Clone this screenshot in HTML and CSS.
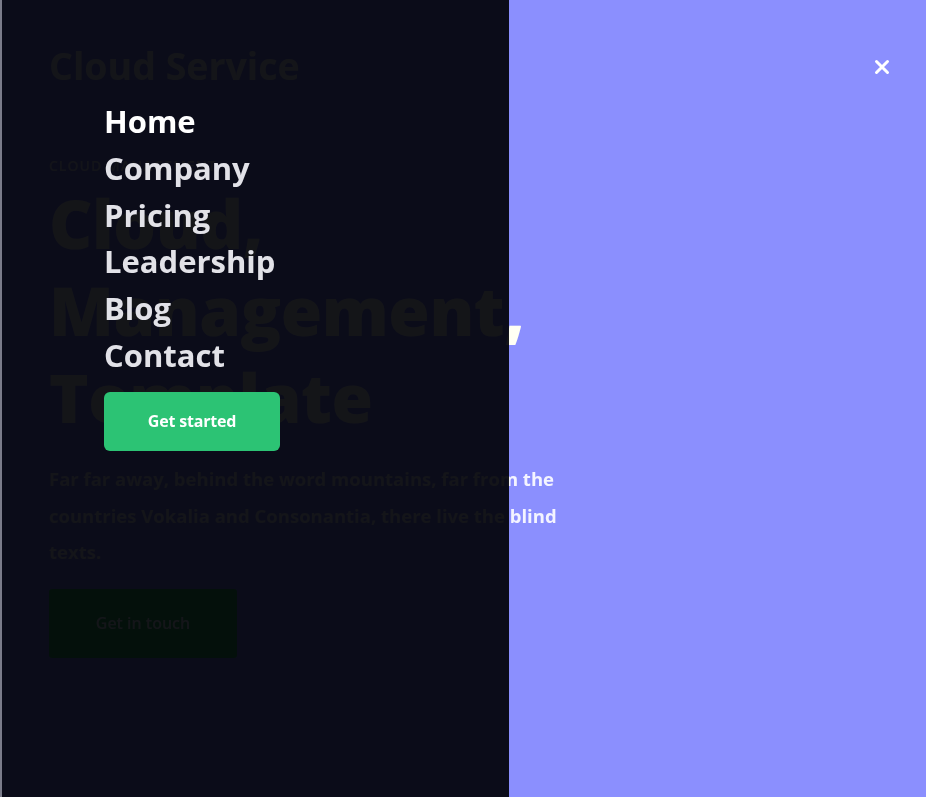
FILE: index.html
```html
<!DOCTYPE html>
<html lang="en">
<head>
<meta charset="utf-8">
<title>Cloud Service</title>
<link rel="stylesheet" href="styles.css">
</head>
<body>
  <div class="page">
    <header class="nav">
      <div class="logo">Cloud Service</div>
    </header>
    <section class="hero">
      <p class="eyebrow">Cloud management</p>
      <h1 class="title">Cloud,<br>Management,<br>Template</h1>
      <p class="lead">Far far away, behind the word mountains, far from the<br>countries Vokalia and Consonantia, there live the blind<br>texts.</p>
      <a class="btn-touch" href="#">Get in touch</a>
    </section>
  </div>

  <div class="dim"></div>

  <nav class="drawer">
    <ul class="menu">
      <li><a class="menu-link active" href="#">Home</a></li>
      <li><a class="menu-link" href="#">Company</a></li>
      <li><a class="menu-link" href="#">Pricing</a></li>
      <li><a class="menu-link" href="#">Leadership</a></li>
      <li><a class="menu-link" href="#">Blog</a></li>
      <li><a class="menu-link" href="#">Contact</a></li>
    </ul>
    <a class="btn-start" href="#">Get started</a>
  </nav>

  <button class="close" aria-label="Close">
    <svg width="16" height="16" viewBox="0 0 16 16">
      <path d="M2.5 2.5 L13.5 13.5 M13.5 2.5 L2.5 13.5" stroke="#ffffff" stroke-width="3" stroke-linecap="round" fill="none"/>
    </svg>
  </button>
</body>
</html>
```

FILE: styles.css
```css
* { box-sizing: border-box; }

html, body {
  margin: 0;
  padding: 0;
}

body {
  width: 926px;
  height: 797px;
  overflow: hidden;
  position: relative;
  background: #8b8ffe;
  font-family: "Open Sans", "Liberation Sans", sans-serif;
  color: #ffffff;
}

.page {
  padding: 0 49px;
}

.nav {
  padding-top: 40px;
}

.logo {
  font-size: 37.5px;
  font-weight: 700;
  line-height: 52px;
}

.hero {
  display: flex;
  flex-direction: column;
  align-items: flex-start;
}

.eyebrow {
  margin: 64px 0 0;
  font-size: 14px;
  font-weight: 600;
  text-transform: uppercase;
  letter-spacing: 1px;
  line-height: 20px;
  color: #f3f3ff;
}

.title {
  margin: 4px 0 0;
  font-size: 67px;
  font-weight: 800;
  line-height: 87px;
  letter-spacing: -0.4px;
  color: #fffff4;
}

.lead {
  margin: 20px 0 0;
  font-size: 18.5px;
  font-weight: 700;
  line-height: 36.5px;
  color: #f4f4ff;
}

.btn-touch {
  margin-top: 18px;
  width: 188px;
  height: 69px;
  display: flex;
  align-items: center;
  justify-content: center;
  background: #2bc36f;
  color: #ffffff;
  border-radius: 3px;
  text-decoration: none;
  font-size: 16px;
  font-weight: 600;
}

/* darkening layer of the open drawer */
.dim {
  position: absolute;
  left: 0;
  top: 0;
  width: 509px;
  height: 797px;
  background: #141519;
  mix-blend-mode: multiply;
}

.drawer {
  position: absolute;
  left: 0;
  top: 0;
  width: 509px;
  height: 797px;
  border-left: 2px solid #7b7c8a;
  padding: 98px 0 0 102px;
}

.menu {
  list-style: none;
  margin: 0;
  padding: 0;
}

.menu-link {
  display: block;
  font-size: 31px;
  font-weight: 700;
  line-height: 46.8px;
  color: #e2e2e8;
  text-decoration: none;
  letter-spacing: 0;
}

.menu-link.active {
  color: #ffffff;
}

.btn-start {
  margin-top: 13px;
  width: 176px;
  height: 59px;
  display: flex;
  align-items: center;
  justify-content: center;
  background: #2cc374;
  color: #ffffff;
  border-radius: 6px;
  text-decoration: none;
  font-size: 16px;
  font-weight: 700;
  letter-spacing: -0.2px;
}

.close {
  position: absolute;
  left: 874px;
  top: 59px;
  width: 16px;
  height: 16px;
  padding: 0;
  border: 0;
  background: none;
  display: flex;
}
```
